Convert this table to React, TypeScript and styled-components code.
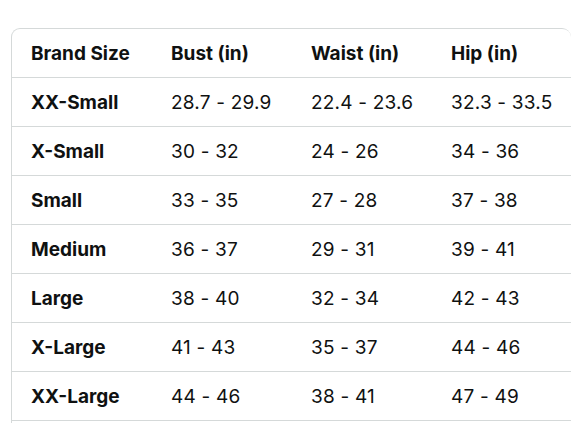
import styled, { createGlobalStyle } from "styled-components";

const GlobalStyle = createGlobalStyle`
    body {
        margin: 0;
        background: #fff;
        font-family: Inter, "Open Sans", sans-serif;
        color: #0f1111;
    }
`;

const headers = ["Brand Size", "Bust (in)", "Waist (in)", "Hip (in)"];

const rows = [
    ["XX-Small", "28.7 - 29.9", "22.4 - 23.6", "32.3 - 33.5"],
    ["X-Small", "30 - 32", "24 - 26", "34 - 36"],
    ["Small", "33 - 35", "27 - 28", "37 - 38"],
    ["Medium", "36 - 37", "29 - 31", "39 - 41"],
    ["Large", "38 - 40", "32 - 34", "42 - 43"],
    ["X-Large", "41 - 43", "35 - 37", "44 - 46"],
    ["XX-Large", "44 - 46", "38 - 41", "47 - 49"],
];

const App = () => {
    return (
        <>
            <GlobalStyle />
            <Page>
                <ChartWrap>
                    <Chart>
                        <thead>
                            <tr>
                                {headers.map((h) => (
                                    <Cell as="th" key={h} $bold>
                                        {h}
                                    </Cell>
                                ))}
                            </tr>
                        </thead>
                        <tbody>
                            {rows.map((r) => (
                                <tr key={r[0]}>
                                    {r.map((c, i) => (
                                        <Cell key={i} $bold={i === 0}>
                                            {c}
                                        </Cell>
                                    ))}
                                </tr>
                            ))}
                        </tbody>
                    </Chart>
                </ChartWrap>
            </Page>
        </>
    );
};

const Page = styled.div`
    padding: 28px 0 0 11px;
`;

const ChartWrap = styled.div`
    width: 559px;
    border: 1px solid #d5d9d9;
    border-right: none;
    border-bottom: none;
    border-radius: 9px 9px 0 0;
    padding-bottom: 2px;
    overflow: hidden;
`;

const Chart = styled.table`
    width: 560px;
    border-collapse: separate;
    border-spacing: 0;
    table-layout: fixed;
`;

const Cell = styled.td<{ $bold?: boolean }>`
    height: 48px;
    padding: 0 0 0 19px;
    border-bottom: 1px solid #d5d9d9;
    text-align: left;
    vertical-align: middle;
    font-size: 19px;
    font-weight: ${(p) => (p.$bold ? 700 : 400)};
    letter-spacing: ${(p) => (p.$bold ? "0" : "0.2px")};
    color: #0f1111;
    white-space: nowrap;
`;

export default App;
